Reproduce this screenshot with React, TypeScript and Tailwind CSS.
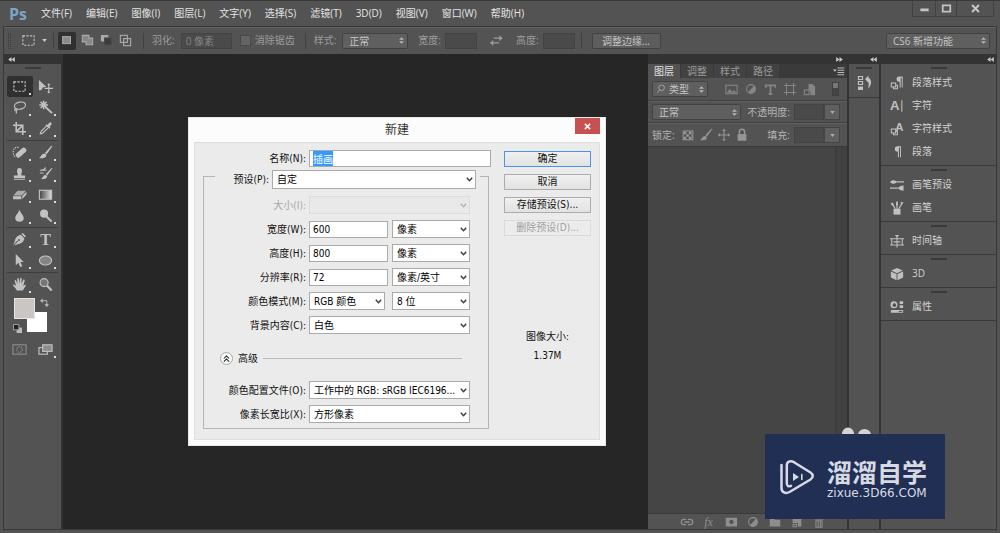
import React, { useEffect, useRef } from 'react'

const menus = ['文件(F)', '编辑(E)', '图像(I)', '图层(L)', '文字(Y)', '选择(S)', '滤镜(T)', '3D(D)', '视图(V)', '窗口(W)', '帮助(H)']

const uiFont = "font-['Open_Sans','Noto_Sans_CJK_SC',sans-serif]"
const dialogFont = "font-['DejaVu_Sans_Condensed','Noto_Sans','Noto_Sans_CJK_SC',sans-serif]"

function Icon({ children, className = 'size-4' }: { children: React.ReactNode; className?: string }) {
    return (
        <svg viewBox="0 0 16 16" className={`shrink-0 ${className}`} fill="none" stroke="currentColor" strokeWidth="1.2" aria-hidden="true">
            {children}
        </svg>
    )
}

const fill = { fill: 'currentColor', stroke: 'none' }

const marquee = <rect x="2" y="3" width="12" height="10" strokeDasharray="2.4 1.4" />
const checker = <path {...fill} d="M3 4h3v3H3zM9 4h3v3H9zM6 7h3v3H6zM3 10h3v3H3zM9 10h3v3H9zM12 7h1v3h-1z" />
const fourWay = <><path d="M8 2.5v11M2.5 8h11" /><path {...fill} d="M8 .8l2 2.6H6zM8 15.2l2-2.6H6zM.8 8l2.6-2v4zM15.2 8l-2.6-2v4z" /></>
const brush = <><path {...fill} d="M15.4 1.2 9.2 9.8 7.4 8.4 14.2.8z" /><path {...fill} d="M7 9c1.600.2 2.200 1.400 1.800 2.700C8 14 4 14.600.8 13.800c2.600-.6 2.400-4.600 6.200-4.800z" /></>
const halfCircle = <><circle cx="8" cy="8" r="5" /><path {...fill} d="M4.400 11.600A5 5 0 0 0 11.600 4.400z" /></>
const pageIcon = <><path {...fill} d="M7 2h4l3 3v9H9V9H7z" /><rect x="2.500" y="8.500" width="5" height="5" /></>

const toolGroups: { name: string; icon: React.ReactNode; active?: boolean; plain?: boolean }[][] = [
    [
        { name: '矩形选框', active: true, icon: marquee },
        { name: '移动', plain: true, icon: <><path {...fill} d="M1 1l8 7.500-3.600.2L3.300 12 1 12z" /><path d="M11.500 5.500v9M7 10h9" /><path {...fill} d="M11.500 4.500l1.800 2h-3.600zM11.500 15.500l1.800-2h-3.600z" /></> },
        { name: '套索', icon: <><ellipse cx="8.500" cy="6" rx="6" ry="3.800" transform="rotate(-12 8.500 6)" /><path d="M4 9.200c-1.600.8-1.400 2.400.2 2.200 1.500-.2 1.600-1.800.2-2M4.500 11.500c.6 1 .4 2-.4 3" /></> },
        { name: '魔棒', icon: <><path strokeWidth="2" d="M8 7.500l7 6.500" /><path strokeWidth="1.600" d="M6 .8v9M1.400 5.300h9.200M2.800 2l6.400 6.600M9.200 2 2.800 8.600" /></> },
        { name: '裁剪', icon: <path strokeWidth="1.700" d="M4.500 1v10.500H15M1 4.500h10.500V15M5 11l6-6" /> },
        { name: '吸管', icon: <><path {...fill} d="M9.200 3.400l1 .8 1.800-2.400c1-1.200 3.400.4 2.400 2l-2 2.200.9 1-1.300 1.300L7.800 4.800z" /><path d="M8.600 5.800 3.400 11l-.9 2.700 2.700-1L10.500 7.500" /></> },
    ],
    [
        { name: '修复画笔', icon: <><rect x="3" y="5.500" width="13" height="5.500" rx="2.500" transform="rotate(-42 9.500 8)" {...fill} /><path strokeDasharray="1.500 1" d="M7 2.500C3 1.500 1 5 1.400 8.500 1.600 11 2.500 12.500 4 13" /></> },
        { name: '画笔', icon: brush },
        { name: '仿制图章', icon: <path {...fill} d="M6 7.800C5 6 4.800 2 8 2s3 4 2 5.800V10h4v3H2v-3h4zM2 14h12v1H2z" /> },
        { name: '历史记录画笔', icon: <><path {...fill} d="M15.500 2.500 9.800 10 8.200 8.800 14.500 2z" /><path {...fill} d="M8 9.500c2 .2 2 2 1.200 3-1.200 1.600-4 1.700-6.200 1 2.200-.5 2.200-3.800 5-4z" /><path d="M2 4.500h7M2.500 4.500c3 0 5-.8 5.500-3M2 7.500h4" /></> },
        { name: '橡皮擦', icon: <><path {...fill} d="M6 4h9l-4.500 5h-9z" opacity=".8" /><path {...fill} d="M1.200 9.800H10V13H1.200zM11 9.500 15.400 5v3L11 12.800z" /></> },
        { name: '渐变', icon: <><rect x="1.500" y="3.500" width="13" height="9.500" fill="url(#ramp)" /><defs><linearGradient id="ramp"><stop stopColor="#444" /><stop offset="1" stopColor="#ddd" /></linearGradient></defs></> },
        { name: '模糊', icon: <path {...fill} d="M8 1.500c.8 3.500 4.500 6 4.500 9.200a4.500 4 0 0 1-9 0C3.500 7.500 7.200 5 8 1.500z" /> },
        { name: '减淡', icon: <><circle cx="6.500" cy="6" r="4.300" {...fill} /><path strokeWidth="2.200" d="M9 9l5.500 5.500" /></> },
    ],
    [
        { name: '钢笔', icon: <><path {...fill} d="M11.500 1 15 4.500l-1.400 1.200L10 2.200zM9.500 3l3.800 3.800c-1 3.500-3.300 5.500-7.300 6.200L2 14.500 6.500 9.800 5.800 9 1.300 13.800 3 9.500C3.600 6 6 3.800 9.500 3z" /><circle cx="7.500" cy="8.500" r="1" fill="#535353" stroke="none" /></> },
        { name: '文字', icon: <text x="8" y="13.500" textAnchor="middle" className="fill-current stroke-none font-['Liberation_Serif',serif] text-[17px] font-bold">T</text> },
        { name: '路径选择', icon: <path {...fill} d="M4 1l8.500 8.500H9l2 4.500-2.200 1-2-4.600L4 13z" /> },
        { name: '椭圆', icon: <ellipse cx="8" cy="8" rx="6.500" ry="4.800" fill="#858585" /> },
    ],
    [
        { name: '抓手', icon: <path {...fill} d="M5 14.500C4.500 12 1.500 10 1 8.500c.3-1 1.500-.8 3.300 1.200L2.800 4c.2-1.200 1.400-1 1.700 0l1.200 3.500L5.600 2c.2-1.300 1.600-1.300 1.800 0l.4 5 .9-5.300c.4-1.200 1.700-.9 1.700.2L10 7.300l1.900-4c.6-1 1.800-.5 1.600.6L12 9.500l1.500-1c1-.4 1.700.3 1 1.200l-3 4.800z" /> },
        { name: '缩放', plain: true, icon: <><circle cx="6.500" cy="6" r="4.300" fill="#777" /><path strokeWidth="2.400" d="M9.500 9l5 5.500" /></> },
    ],
]

function Tool({ name, icon, active, plain }: { name: string; icon: React.ReactNode; active?: boolean; plain?: boolean }) {
    return (
        <button aria-label={name} className={`relative flex h-[21px] items-center justify-center rounded-xs text-[#c2c2c2] ${active ? 'bg-[#303030]' : ''}`}>
            <Icon className="size-[15px]">{icon}</Icon>
            {!plain && <span className="absolute right-0.5 bottom-0.5 size-0.5 bg-[#dcdcdc]" />}
        </button>
    )
}

function Grip() {
    return <div className="mx-auto h-0.5 w-4 bg-[#3a3a3a]" />
}

function Collapse({ right }: { right?: boolean }) {
    return (
        <svg viewBox="0 0 8 6" className={`h-[5px] w-[7px] fill-[#c8c8c8] ${right ? 'rotate-180' : ''}`} aria-hidden="true">
            <path d="M4 0v6L0 3zM8 0v6L4 3z" />
        </svg>
    )
}

function Toolbar() {
    return (
        <aside className="flex w-[57px] shrink-0 flex-col">
            <div className="flex h-[10px] items-center bg-[#333333] px-1"><Collapse /></div>
            <div className="pt-[3px] pb-[7px]"><Grip /></div>
            {toolGroups.map((group, i) => (
                <div key={i} className={`mx-[3px] grid grid-cols-2 ${i ? 'mt-px border-t border-[#3d3d3d] pt-px' : ''}`}>
                    {group.map(t => <Tool key={t.name} {...t} />)}
                </div>
            ))}
            {/* Foreground / background swatches */}
            <div className="relative mx-2 mt-[3px] h-9">
                <button aria-label="背景色" className="absolute top-[14px] left-[15px] size-5 bg-white" />
                <button aria-label="前景色" className="absolute top-0 left-0.5 size-[21px] border border-[#e6e6e6] bg-[#c9c6c4]" />
                <svg viewBox="0 0 10 10" className="absolute top-0 left-7 size-[9px] text-[#bdbdbd]" fill="none" stroke="currentColor" aria-hidden="true"><path d="M2 3h5.500v5" /><path d="M0 3l3-2.500v5zM7.500 10 5 7h5z" {...fill} /></svg>
                <svg viewBox="0 0 10 10" className="absolute top-[26px] left-[1px] size-[9px]" aria-hidden="true"><path d="M4 4h6v6H4z" fill="#bbb" /><path d="M.5.5h6v6h-6z" fill="#222" stroke="#aaa" /></svg>
            </div>
            <div className="mx-[3px] mt-[5px] grid grid-cols-2">
                <Tool name="快速蒙版" plain icon={<g className="text-[#8d8d8d]" stroke="currentColor"><rect x="1" y="3" width="14" height="10" /><circle cx="8" cy="8" r="3" strokeDasharray="1.500 1" /></g>} />
                <Tool name="屏幕模式" icon={<><rect x="1" y="6" width="9" height="7" /><rect x="5" y="3" width="10" height="7" fill="#8d8d8d" /></>} />
            </div>
        </aside>
    )
}

// dark select used in the option bar and in the layer panel
function DarkSelect({ label, value, className, pad = 'pl-1.5' }: { label: string; value: string; className: string; pad?: string }) {
    return (
        <div className={`grid shrink-0 items-center ${className}`}>
            <select aria-label={label} className={`col-start-1 row-start-1 h-4 w-full appearance-none rounded-xs border border-[#424242] bg-[#5f5f5f] text-[10px] leading-[14px] text-[#c4c4c4] outline-none ${pad}`}>
                <option>{value}</option>
            </select>
            <svg viewBox="0 0 6 8" className="pointer-events-none col-start-1 row-start-1 mr-1 h-[7px] w-[5px] justify-self-end fill-[#b5b5b5]" aria-hidden="true">
                <path d="M3 0l3 3H0zM3 8l3-3H0z" />
            </svg>
        </div>
    )
}

function Divider() {
    return <div className="h-4 w-px shrink-0 bg-[#414141]" />
}

const darkInput = 'h-4 rounded-none border border-[#434343] bg-[#4a4a4a] px-1 text-[10px] text-[#858585] outline-none'

function OptionBar() {
    return (
        <div className="flex h-[27px] shrink-0 items-center border-t border-[#626262] pr-[6px] pb-px pl-1 text-[10px] whitespace-nowrap text-[#9c9c9c]">
            <div className="h-4 w-[3px] border-x border-dotted border-[#3e3e3e]" />
            <button aria-label="工具预设" className="ml-2.5 flex items-center gap-1.5 text-[#c0c0c0]">
                <Icon className="size-[15px]">{marquee}</Icon>
                <svg viewBox="0 0 6 4" className="h-[3px] w-[5px] fill-[#d0d0d0]"><path d="M0 0h6L3 4z" /></svg>
            </button>
            <div className="ml-1.5 flex items-center gap-[4px]">
                <Divider />
                <button aria-label="新选区" className="flex size-[18px] items-center justify-center rounded-xs bg-[#303030] text-[#a8a8a8]"><Icon className="size-[14px]"><rect x="3" y="3" width="9" height="8" fill="#8a8a8a" /></Icon></button>
                <button aria-label="添加到选区" className="text-[#aaaaaa]"><Icon className="size-[15px]"><path fill="#888" d="M2.500 2.500h7v3h4v7h-7v-3h-4z" /></Icon></button>
                <button aria-label="从选区减去" className="text-[#aaaaaa]"><Icon className="size-[15px]"><path {...fill} d="M2 2h8v3H6v4H2z" /><path d="M6 5.500h7v7H6z" fill="#3c3c3c" stroke="#484848" /></Icon></button>
                <button aria-label="与选区交叉" className="text-[#aaaaaa]"><Icon className="size-[15px]"><rect x="2.500" y="2.500" width="7.500" height="7.500" /><rect x="6" y="6" width="7.500" height="7.500" /></Icon></button>
            </div>
            <div className="mr-2 ml-2.5"><Divider /></div>
            <label htmlFor="feather">羽化:</label>
            <input id="feather" defaultValue="0 像素" className={`ml-1.5 w-[51px] ${darkInput}`} />
            <label className="mr-2.5 ml-2 flex items-center gap-1">
                <input type="checkbox" className="size-[11px] appearance-none border border-[#484848] bg-[#636363]" />
                消除锯齿
            </label>
            <Divider />
            <span className="ml-2">样式:</span>
            <DarkSelect label="样式" value="正常" className="ml-1.5 w-[66px]" />
            <label htmlFor="w" className="ml-2.5">宽度:</label>
            <input id="w" className={`ml-1 w-8 ${darkInput}`} />
            <button aria-label="高度和宽度互换" className="mx-3"><Icon className="size-[15px]"><path d="M2 10.500h9M5 5.500h9" /><path {...fill} d="M4.500 7.500v6L1 10.500zM11 2.500v6l3.500-3z" /></Icon></button>
            <label htmlFor="h">高度:</label>
            <input id="h" className={`mr-1.5 ml-1 w-8 ${darkInput}`} />
            <Divider />
            <button className="ml-2.5 h-4 w-[69px] rounded-xs border border-[#424242] bg-[#5d5d5d] leading-[14px] text-[#c4c4c4]">调整边缘...</button>
            <DarkSelect label="工作区" value="CS6 新增功能" className="ml-auto w-[104px]" />
        </div>
    )
}

function PercentBox({ id }: { id: string }) {
    return (
        <div className="ml-1 flex">
            <input id={id} className={`w-[30px] ${darkInput}`} />
            <button aria-label="展开" className="flex h-4 w-4 items-center justify-center border border-[#454545] bg-[#606060]">
                <svg viewBox="0 0 6 4" className="h-[3px] w-[5px] fill-[#aaa]"><path d="M0 0h6L3 4z" /></svg>
            </button>
        </div>
    )
}

function LayersPanel() {
    return (
        <section className="flex w-[199px] shrink-0 flex-col text-[10px] text-[#b4b4b4]">
            <div className="flex h-[10px] items-center justify-end bg-[#333333] px-1"><Collapse right /></div>
            <div className="flex h-[14px] items-center gap-px bg-[#3a3a3a] leading-[14px]">
                <button className="h-full w-8 bg-[#535353] text-[#e0e0e0]">图层</button>
                <button className="h-full w-8 bg-[#424242] text-[#9a9a9a]">调整</button>
                <button className="h-full w-8 bg-[#424242] text-[#9a9a9a]">样式</button>
                <button className="h-full w-8 bg-[#424242] text-[#9a9a9a]">路径</button>
                <button aria-label="面板菜单" className="mr-0.5 ml-auto text-[#c8c8c8]"><Icon className="size-3"><path {...fill} d="M0 6h5L2.500 9z" /><path d="M6 4h9M6 7h9M6 10h9M6 13h9" /></Icon></button>
            </div>
            <div className="flex h-[23px] items-center border-b border-[#404040] px-1">
                <div className="grid w-14 items-center">
                    <DarkSelect label="过滤类型" value="类型" pad="pl-4" className="col-start-1 row-start-1 w-full" />
                    <Icon className="pointer-events-none col-start-1 row-start-1 ml-1 size-[10px]"><circle cx="9" cy="6" r="4.500" /><path d="M6 9.500 2 14" /></Icon>
                </div>
                <div className="ml-4 flex items-center gap-[5px] text-[#858585]">
                    <Icon className="size-[15px]"><rect x="2" y="3.500" width="12" height="9" /><path {...fill} d="M3 11.500l3-4 3 3 2-2 2 3z" /></Icon>
                    <Icon className="size-[14px]">{halfCircle}</Icon>
                    <Icon className="size-[15px]"><path strokeWidth="1.800" d="M3 6V3.500h10V6M8 3.500V13M6 13h4" /></Icon>
                    <Icon className="size-[14px]"><path d="M4 1v14M12 1v14M1 4h14M1 12h14" /></Icon>
                    <Icon className="size-[15px]">{pageIcon}</Icon>
                </div>
                <button aria-label="过滤开关" className="mr-1 ml-auto h-3.5 w-[7px] border border-[#3f3f3f] bg-linear-to-b from-[#777777] from-45% to-[#454545] to-45%" />
            </div>
            <div className="flex h-[22px] items-center border-t border-b border-t-[#606060] border-b-[#404040] px-1">
                <DarkSelect label="混合模式" value="正常" className="w-[89px]" />
                <label htmlFor="opacity" className="ml-auto">不透明度:</label>
                <div className="pr-[3px]"><PercentBox id="opacity" /></div>
            </div>
            <div className="flex h-[24px] items-center border-t border-b border-t-[#606060] border-b-[#3a3a3a] px-1">
                <span>锁定:</span>
                <div className="ml-1.5 flex items-center gap-1 text-[#969696]">
                    <Icon className="size-[14px]"><path d="M2.500 3.500h11v10h-11z" />{checker}</Icon>
                    <Icon className="size-[14px]">{brush}</Icon>
                    <Icon className="size-[14px]">{fourWay}</Icon>
                    <Icon className="size-[14px]"><path {...fill} d="M3 7h10v7.500H3z" /><path strokeWidth="1.600" d="M5 7V4.500a3 3 0 0 1 6 0V7" /></Icon>
                </div>
                <label htmlFor="fill" className="ml-auto">填充:</label>
                <div className="pr-[3px]"><PercentBox id="fill" /></div>
            </div>
            <div className="flex flex-1 justify-end bg-[#454545]"><div className="w-3 border-l border-[#3b3b3b] bg-[#414141]" /></div>
            <div className="flex h-4 items-center justify-center gap-2 border-t border-[#3a3a3a] pr-1 pl-3.5 text-[#8e8e8e]">
                <Icon className="size-[14px]"><path strokeWidth="1.500" d="M7 5H4.500a3 3 0 0 0 0 6H7M9 5h2.500a3 3 0 0 1 0 6H9M5 8h6" /></Icon>
                <span className="w-[14px] text-center font-['Liberation_Serif',serif] text-[12px] leading-[14px] italic">fx</span>
                <Icon className="size-[14px]"><path {...fill} fillRule="evenodd" d="M2 3h13v10H2zM8.500 5.500a2.500 2.500 0 1 0 .01 0z" /></Icon>
                <Icon className="size-[14px]">{halfCircle}</Icon>
                <Icon className="size-[14px]"><path {...fill} d="M2 4h5l1 1.500h6V13H2z" /></Icon>
                <Icon className="size-[14px]"><path {...fill} d="M3 3h10v10H9V9H3z" /><path d="M3.500 10.500h4v3h-4z" /></Icon>
                <Icon className="size-[14px]"><path d="M3 4.500h10M6 4V2.500h4V4M4.500 6.500h7V14h-7zM7 7v6M9.500 7v6" /></Icon>
            </div>
        </section>
    )
}

const glyph = "fill-current stroke-none font-['Liberation_Sans',sans-serif]"
const linked = <><rect x="1.500" y="8" width="5" height="4.500" /><path d="M4 12.500v2h4.500v-4h-2" /></>
const pilcrow = <path {...fill} d="M12.500 1.500h-4a3 3 0 0 0 0 6H9V14h1.200V3h1.200v11h1.100z" />

const panelGroups: { label: string; icon: React.ReactNode }[][] = [
    [
        { label: '段落样式', icon: <><g transform="translate(2 -1)">{pilcrow}</g>{linked}</> },
        { label: '字符', icon: <><text x="0" y="13" className={`${glyph} text-[15px] font-bold`}>A</text><path d="M13.500 1.500v13" /></> },
        { label: '字符样式', icon: <><text x="6" y="10" className={`${glyph} text-[13px] font-bold`}>A</text>{linked}</> },
        { label: '段落', icon: pilcrow },
    ],
    [
        { label: '画笔预设', icon: <><path strokeWidth="1.500" d="M6 4.500h10M0 11.500h9" /><path {...fill} d="M0 4.500C2 2 5 2 7 3.500v2C5 7 2 7 0 4.500zM15.500 8.500v6c-3 0-5-1-6.500-3 1.500-2 3.500-3 6.500-3z" /></> },
        { label: '画笔', icon: <><path {...fill} d="M4 9h8v6.500H4z" /><path strokeWidth="1.300" d="M6 9 2.500 3M8 9V2M10 9l3.500-6" /><path {...fill} d="M.8 2.500l2.500-.7 1 3-1.500.8zM7 .5h2V5H7zM12 1l3.500.5L13 5z" /></> },
    ],
    [{ label: '时间轴', icon: <><path d="M0 5.500h16M0 12.500h16M2 5.500v7M14 5.500v7M8 3v12.500M4 9h8" /><path {...fill} d="M5.500 1h5L8 4z" /></> }],
    [{ label: '3D', icon: <><path {...fill} d="M8 1l6.500 3L8 7 1.500 4zM1 5l6.500 3v7L1 12zM15 5 8.500 8v7l6.500-3z" /></> }],
    [{ label: '属性', icon: <><path {...fill} fillRule="evenodd" d="M4.500 1.500a4 4 0 1 1 0 8 4 4 0 0 1 0-8zM5 3 3 5v2l2 1 2-1V5z" /><path {...fill} d="M11 1.500h4v3h-4zM11 6h4v3h-4zM1 11.500h14v3H1z" /><path stroke="#535353" d="M10 13h4" /></> }],
]

function DockPanels() {
    return (
        <nav className="flex w-[115px] shrink-0 flex-col">
            <div className="flex h-[10px] shrink-0 items-center justify-end bg-[#333333] px-0.5"><Collapse /></div>
            {panelGroups.map((group, i) => (
                <div key={i} className="border-b border-[#3a3a3a] pb-0.5">
                    <div className="h-[7px] pt-[3px]"><Grip /></div>
                    {group.map(p => (
                        <button key={p.label} className="flex h-[23px] w-full items-center gap-2 px-[9px] text-[10px] text-[#d2d2d2]">
                            <Icon className="size-[14px] text-[#c0c0c0]">{p.icon}</Icon>
                            {p.label}
                        </button>
                    ))}
                </div>
            ))}
        </nav>
    )
}

function Select({ id, label, value, disabled, size = 'h-[18px] w-full' }: { id?: string; label?: string; value: string; disabled?: boolean; size?: string }) {
    return (
        <div className={`grid items-center ${size}`}>
            <select id={id} aria-label={label} disabled={disabled} className="col-start-1 row-start-1 h-full w-full appearance-none border border-[#aaaaaa] bg-white px-1 text-[10px] text-black outline-none disabled:border-[#dcdcdc] disabled:bg-[#e9e9e9]">
                <option>{value}</option>
            </select>
            <svg viewBox="0 0 8 6" className={`pointer-events-none col-start-1 row-start-1 mr-[3px] h-[5px] w-[7px] justify-self-end ${disabled ? 'text-[#b5b5b5]' : 'text-[#404040]'}`} fill="none" stroke="currentColor" strokeWidth="1.800" aria-hidden="true">
                <path d="M.8 1 4 4.500 7.200 1" />
            </svg>
        </div>
    )
}

function Row({ id, label, muted, children }: { id: string; label: string; muted?: boolean; children: React.ReactNode }) {
    return (
        <div className="flex h-[18px] items-center gap-[3px]">
            <label htmlFor={id} className={`w-[102px] text-right ${muted ? 'text-[#a5a5a5]' : ''}`}>{label}</label>
            <div className="flex w-[161px] items-center justify-between">{children}</div>
        </div>
    )
}

const textInput = 'h-[17px] border border-[#aaaaaa] bg-white px-[3px] text-[10px] text-black outline-none'

function PushButton({ children, primary, disabled }: { children: React.ReactNode; primary?: boolean; disabled?: boolean }) {
    return (
        <button
            disabled={disabled}
            className={`h-4 w-[87px] border bg-linear-to-b from-[#f0f0f0] to-[#e2e2e2] leading-[14px] disabled:border-[#dadada] disabled:from-[#ececec] disabled:to-[#ececec] disabled:text-[#a0a0a0] ${primary ? 'border-[#4a94ea]' : 'border-[#acacac]'}`}
        >
            {children}
        </button>
    )
}

function NewDocumentDialog() {
    const nameRef = useRef<HTMLInputElement>(null)

    useEffect(() => {
        nameRef.current?.focus()
        nameRef.current?.select()
    }, [])

    return (
        <div role="dialog" aria-labelledby="dialog-title" className={`absolute top-[117px] left-[188px] border border-[#e8e8e8] bg-[#fcfcfc] px-[5px] pb-[5px] text-[10px] whitespace-nowrap text-[#111111] ${dialogFont}`}>
            <div className="grid h-6 grid-cols-[1fr_auto_1fr]">
                <h1 id="dialog-title" className="col-start-2 self-center text-[12px] text-[#333333]">新建</h1>
                <button aria-label="关闭" className="flex h-4 w-[25px] items-center justify-center justify-self-end bg-[#c75050]">
                    <svg viewBox="0 0 8 8" className="size-[7px]" stroke="white" strokeWidth="1.700"><path d="M1 1l6 6M7 1 1 7" /></svg>
                </button>
            </div>
            <div className="flex gap-[13px] border border-[#dedede] bg-[#ebebeb] px-2 pt-[7px] pb-2.5">
                <div>
                    <div className="flex items-center gap-[3px]">
                        <label htmlFor="name" className="w-[103px] text-right">名称(N):</label>
                        <input id="name" ref={nameRef} defaultValue="插画" className={`w-[182px] ${textInput} selection:bg-[#3399ff] selection:text-white`} />
                    </div>
                    <div className="mt-[9px] flex w-[286px] flex-col gap-1.5 border border-[#b4b4b4] pb-[5px]">
                        <div className="-mt-[7px] mb-px ml-[11px] flex w-[265px] items-center gap-[3px] bg-[#ebebeb]">
                            <label htmlFor="preset" className="w-[54px] text-right">预设(P):</label>
                            <Select id="preset" value="自定" size="h-[19px] w-[204px]" />
                        </div>
                        <Row id="size" label="大小(I):" muted><Select id="size" value="" disabled /></Row>
                        <Row id="width" label="宽度(W):">
                            <input id="width" defaultValue="600" className={`w-[79px] ${textInput}`} />
                            <Select label="宽度单位" value="像素" size="h-[18px] w-[78px]" />
                        </Row>
                        <Row id="height" label="高度(H):">
                            <input id="height" defaultValue="800" className={`w-[79px] ${textInput}`} />
                            <Select label="高度单位" value="像素" size="h-[18px] w-[78px]" />
                        </Row>
                        <Row id="resolution" label="分辨率(R):">
                            <input id="resolution" defaultValue="72" className={`w-[79px] ${textInput}`} />
                            <Select label="分辨率单位" value="像素/英寸" size="h-[18px] w-[78px]" />
                        </Row>
                        <Row id="mode" label="颜色模式(M):">
                            <Select id="mode" value="RGB 颜色" size="h-[18px] w-[76px]" />
                            <Select label="位深度" value="8 位" size="h-[18px] w-[78px]" />
                        </Row>
                        <Row id="background" label="背景内容(C):"><Select id="background" value="白色" /></Row>
                        <div className="mt-[9px] mb-2 flex h-[18px] items-center gap-[5px] pr-[26px] pl-4">
                            <button aria-label="折叠高级选项" className="flex size-[13px] items-center justify-center rounded-full border border-[#a8a8a8] bg-[#f8f8f8]">
                                <svg viewBox="0 0 8 8" className="size-[7px]" fill="none" stroke="#222" strokeWidth="1.200"><path d="M1 4l3-3 3 3M1 7.500l3-3 3 3" /></svg>
                            </button>
                            <span>高级</span>
                            <div className="h-px flex-1 bg-[#bdbdbd]" />
                        </div>
                        <Row id="profile" label="颜色配置文件(O):"><Select id="profile" value="工作中的 RGB: sRGB IEC6196..." /></Row>
                        <Row id="ratio" label="像素长宽比(X):"><Select id="ratio" value="方形像素" /></Row>
                    </div>
                </div>
                <div className="flex flex-col items-center gap-[7px] pt-px">
                    <PushButton primary>确定</PushButton>
                    <PushButton>取消</PushButton>
                    <PushButton>存储预设(S)...</PushButton>
                    <PushButton disabled>删除预设(D)...</PushButton>
                    <div className="mt-[84px] text-center leading-[19px]">
                        <p>图像大小:</p>
                        <p>1.37M</p>
                    </div>
                </div>
            </div>
        </div>
    )
}

function Watermark() {
    return (
        <div className="absolute top-[427px] left-[765px] text-[#d8dae3]">
            <svg viewBox="0 0 180 7" className="h-[7px] w-full" aria-hidden="true">
                <ellipse cx="83" cy="7" rx="6" ry="6.500" fill="#d4d4d4" />
                <ellipse cx="99.500" cy="8" rx="6.500" ry="6" fill="#d4d4d4" />
            </svg>
            <div className="flex h-[85px] w-[180px] items-center gap-3 bg-[#212f55] pl-3.5">
                <svg viewBox="0 0 36 36" className="size-9 shrink-0" fill="none" stroke="currentColor" strokeWidth="2.500" strokeLinecap="round" strokeLinejoin="round" aria-hidden="true">
                    <path d="M2.500 6v23c0 4.500 4 6 8 4l21-12.500c3-2 3-5 0-7L15 3.200C11 1 7.800 3 7.800 6.500V24c0 3 1.500 4 4.200 2.800" />
                    <path d="M14 14v8l6-4z" fill="currentColor" stroke="none" />
                    <path d="M22.800 15.500v5" strokeWidth="1.600" />
                </svg>
                <div className="whitespace-nowrap">
                    <p className="font-['Noto_Sans_CJK_SC',sans-serif] text-[25px] leading-[32px] font-bold">溜溜自学</p>
                    <p className="font-['DejaVu_Sans',sans-serif] text-[12px] leading-[12px]">zixue.3D66.COM</p>
                </div>
            </div>
        </div>
    )
}

export default function App() {
    return (
        <div className={`relative flex h-screen flex-col overflow-hidden bg-[#535353] ${uiFont}`}>
            {/* Menu bar */}
            <header className="flex h-[26px] shrink-0 items-center border-t border-[#3a3a3a] pl-[9px]">
                <span className="font-['Open_Sans',sans-serif] text-[16px] leading-6 font-bold text-[#7ba4c9]">Ps</span>
                <nav className="ml-3.5 flex gap-[14px] text-[10px] whitespace-nowrap text-[#e4e4e4]">
                    {menus.map(m => <button key={m}>{m}</button>)}
                </nav>
                <div className="mr-1.5 ml-auto flex h-4 self-start border-x border-b border-[#414141] text-[#c4c4c4]">
                    <button aria-label="最小化" className="flex w-[22px] items-center justify-center"><Icon className="size-[11px]"><path strokeWidth="4" d="M2 10h12" /></Icon></button>
                    <button aria-label="最大化" className="flex w-[22px] items-center justify-center border-x border-[#414141]"><Icon className="size-[11px]"><path strokeWidth="2.500" d="M2.500 3.500h11v9h-11z" /></Icon></button>
                    <button aria-label="关闭窗口" className="flex w-[36px] items-center justify-center"><Icon className="size-[11px]"><path strokeWidth="3" d="M3 3l10 10M13 3 3 13" /></Icon></button>
                </div>
            </header>

            <div className="mx-[3px] mb-[3px] flex min-h-0 flex-1 flex-col border border-[#383838]">
                <OptionBar />
                <main className="flex min-h-0 flex-1 gap-0.5 bg-[#333333] *:bg-[#535353]">
                    <Toolbar />
                    <div className="-mr-0.5 flex-1 bg-[#262626]!" />
                    <LayersPanel />
                    <aside className="w-[30px] shrink-0">
                        <div className="flex h-[10px] items-center justify-end bg-[#333333] px-0.5"><Collapse /></div>
                        <div className="flex h-[34px] flex-col items-center gap-1.5 border-b border-[#3a3a3a] pt-[3px]">
                            <Grip />
                            <button aria-label="历史记录" className="text-[#c0c0c0]"><Icon><path d="M2.500 1.500h4v3h-4zM2.500 6.500h4v3h-4z" /><path {...fill} d="M2 11.500h5V15H2zM9 4l3.500-3.500v2.200c3.500 1.800 3.500 7.300-.5 11 1.200-4 1-6.700-.5-7.200l1 1.500z" /></Icon></button>
                        </div>
                    </aside>
                    <DockPanels />
                </main>
            </div>

            <NewDocumentDialog />
            <Watermark />
        </div>
    )
}
